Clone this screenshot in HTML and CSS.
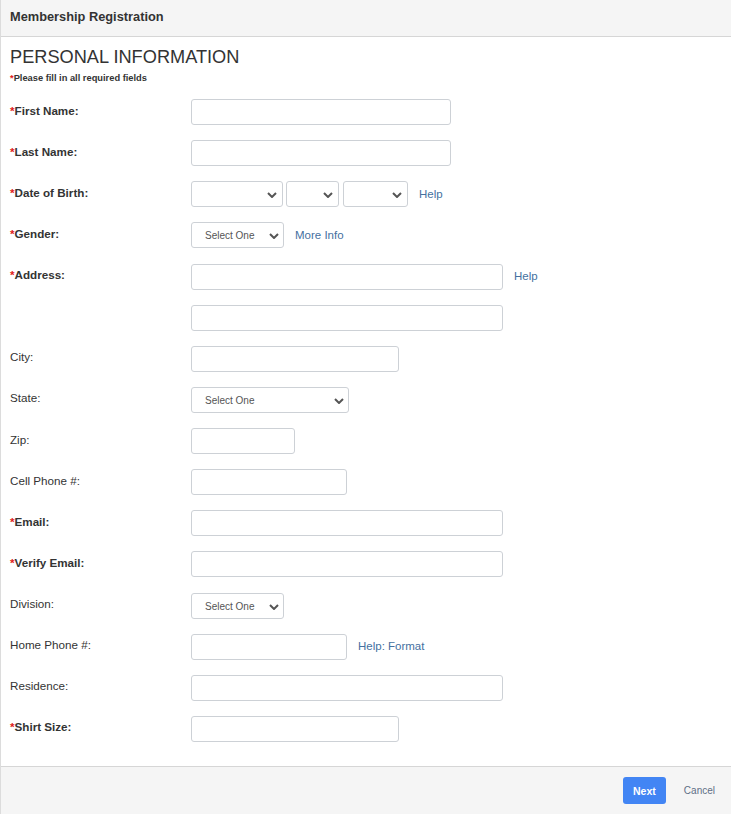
FILE: index.html
```html
<!DOCTYPE html>
<html lang="en">
<head>
<meta charset="utf-8">
<title>Membership Registration</title>
<link rel="stylesheet" href="styles.css">
</head>
<body>
<div class="panel">
  <div class="panel-head">Membership Registration</div>
  <div class="panel-body">
    <h2 class="title">PERSONAL INFORMATION</h2>
    <p class="note"><span class="req">*</span>Please fill in all required fields</p>
    <form class="form">
      <div class="row"><label class="lbl strong"><span class="req">*</span>First Name:</label><input class="inp w260" type="text"></div>
      <div class="row"><label class="lbl strong"><span class="req">*</span>Last Name:</label><input class="inp w260" type="text"></div>
      <div class="row"><label class="lbl strong"><span class="req">*</span>Date of Birth:</label>
        <div class="ctls">
          <span class="sel w92"><select></select><svg class="chev" viewBox="0 0 10 6"><path d="M1 1l4 4 4-4"/></svg></span>
          <span class="sel w53 ml3"><select></select><svg class="chev" viewBox="0 0 10 6"><path d="M1 1l4 4 4-4"/></svg></span>
          <span class="sel w65 ml4"><select></select><svg class="chev" viewBox="0 0 10 6"><path d="M1 1l4 4 4-4"/></svg></span>
          <a class="link" href="#">Help</a>
        </div>
      </div>
      <div class="row"><label class="lbl strong"><span class="req">*</span>Gender:</label>
        <div class="ctls">
          <span class="sel w93"><select><option>Select One</option></select><svg class="chev big" viewBox="0 0 10 6"><path d="M1 1l4 4 4-4"/></svg></span>
          <a class="link" href="#">More Info</a>
        </div>
      </div>
      <div class="row"><label class="lbl strong"><span class="req">*</span>Address:</label>
        <div class="ctls"><input class="inp w312" type="text"><a class="link" href="#">Help</a></div>
      </div>
      <div class="row"><label class="lbl"></label><input class="inp w312" type="text"></div>
      <div class="row"><label class="lbl">City:</label><input class="inp w208" type="text"></div>
      <div class="row"><label class="lbl">State:</label>
        <span class="sel w158"><select><option>Select One</option></select><svg class="chev big" viewBox="0 0 10 6"><path d="M1 1l4 4 4-4"/></svg></span>
      </div>
      <div class="row"><label class="lbl">Zip:</label><input class="inp w104" type="text"></div>
      <div class="row"><label class="lbl">Cell Phone #:</label><input class="inp w156" type="text"></div>
      <div class="row"><label class="lbl strong"><span class="req">*</span>Email:</label><input class="inp w312" type="text"></div>
      <div class="row"><label class="lbl strong"><span class="req">*</span>Verify Email:</label><input class="inp w312" type="text"></div>
      <div class="row"><label class="lbl">Division:</label>
        <span class="sel w93"><select><option>Select One</option></select><svg class="chev big" viewBox="0 0 10 6"><path d="M1 1l4 4 4-4"/></svg></span>
      </div>
      <div class="row"><label class="lbl">Home Phone #:</label>
        <div class="ctls"><input class="inp w156" type="text"><a class="link" href="#">Help: Format</a></div>
      </div>
      <div class="row"><label class="lbl">Residence:</label><input class="inp w312" type="text"></div>
      <div class="row"><label class="lbl strong"><span class="req">*</span>Shirt Size:</label><input class="inp w208" type="text"></div>
    </form>
  </div>
  <div class="panel-foot">
    <button class="btn-next" type="button">Next</button>
    <a class="cancel" href="#">Cancel</a>
  </div>
</div>
</body>
</html>
```

FILE: styles.css
```css
* { box-sizing: border-box; }
html, body { margin: 0; padding: 0; background: #fff; }
body {
  font-family: "Liberation Sans", Arial, sans-serif;
  color: #333;
}
.panel {
  border-left: 1px solid #dcdcdc;
  min-height: 814px;
  display: flex;
  flex-direction: column;
}
.panel-head {
  height: 37px;
  background: #f5f5f5;
  border-bottom: 1px solid #d6d6d6;
  padding: 0 9px;
  font-size: 12.8px;
  font-weight: bold;
  line-height: 34px;
  color: #333;
}
.panel-body {
  flex: 1;
  padding: 0 9px 24px;
}
.title {
  margin: 9px 0 0;
  font-size: 18.2px;
  line-height: 22px;
  font-weight: normal;
  color: #333;
}
.note {
  margin: 4px 0 0;
  font-size: 9.3px;
  line-height: 12px;
  font-weight: bold;
  color: #333;
}
.req { color: #e02020; }
.form {
  margin-top: 15px;
  display: flex;
  flex-direction: column;
  gap: 15.13px;
}
.row {
  display: flex;
  align-items: center;
  height: 26px;
}
.lbl {
  width: 181px;
  flex: none;
  font-size: 11.65px;
  line-height: 14px;
  margin-bottom: 3px;
  color: #333;
}
.lbl.strong { font-weight: bold; }
.ctls {
  display: flex;
  align-items: center;
}
.inp {
  height: 26px;
  border: 1px solid #cdd1d6;
  border-radius: 3px;
  background: #fff;
  padding: 0 6px;
  font: inherit;
  font-size: 12px;
  outline: none;
}
.w104 { width: 104px; }
.w156 { width: 156px; }
.w208 { width: 208px; }
.w260 { width: 260px; }
.w312 { width: 312px; }
.sel {
  position: relative;
  display: inline-block;
  height: 26px;
  flex: none;
}
.sel select {
  appearance: none;
  -webkit-appearance: none;
  width: 100%;
  height: 26px;
  border: 1px solid #cdd1d6;
  border-radius: 3px;
  background: #fff;
  padding: 1px 0 0 13px;
  font-family: "Liberation Sans", Arial, sans-serif;
  font-size: 10px;
  color: #555;
  outline: none;
}
.chev {
  position: absolute;
  right: 6px;
  top: 11px;
  width: 10px;
  height: 6px;
  fill: none;
  stroke: #555;
  stroke-width: 2;
  pointer-events: none;
}
.chev.big { right: 5px; }
.w53 { width: 53px; }
.w65 { width: 65px; }
.w92 { width: 92px; }
.w93 { width: 93px; }
.w158 { width: 158px; }
.ml3 { margin-left: 3px; }
.ml4 { margin-left: 4px; }
.link {
  margin-left: 11px;
  margin-bottom: 1px;
  font-size: 11.5px;
  color: #45709f;
  text-decoration: none;
}
.panel-foot {
  height: 48px;
  background: #f5f5f5;
  border-top: 1px solid #d6d6d6;
  display: flex;
  justify-content: flex-end;
  align-items: center;
  padding: 0 16px 0 0;
}
.btn-next {
  width: 43px;
  height: 27px;
  border: none;
  border-radius: 3px;
  background: #4285f4;
  color: #fff;
  font-family: "Liberation Sans", Arial, sans-serif;
  font-size: 10.5px;
  font-weight: bold;
  padding: 0;
}
.cancel {
  margin-left: 18px;
  font-size: 10px;
  color: #5f6f86;
  text-decoration: none;
}
```
